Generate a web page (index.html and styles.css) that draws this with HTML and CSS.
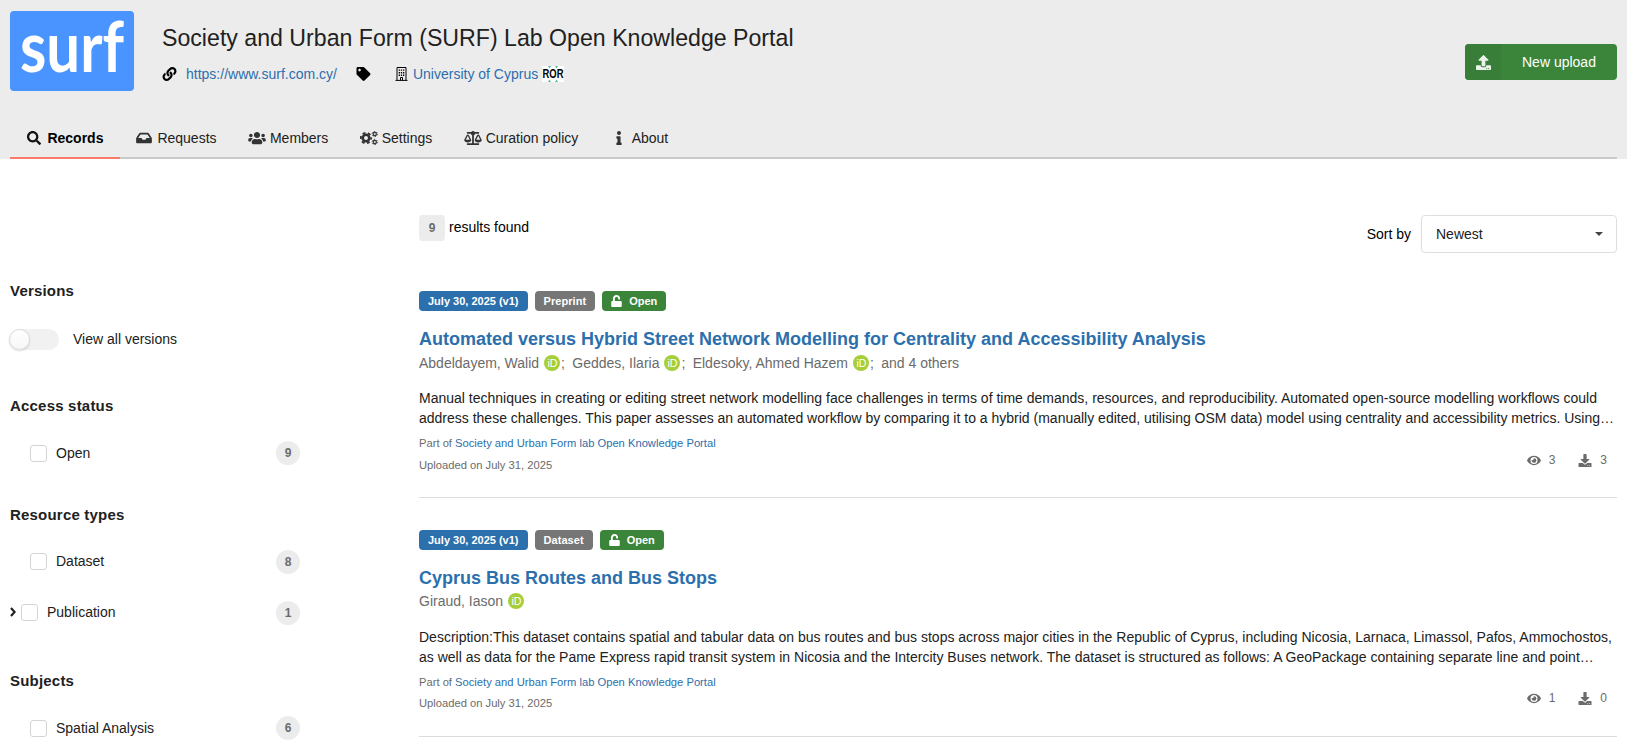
FILE: index.html
```html
<!DOCTYPE html>
<html lang="en">
<head>
  <meta charset="UTF-8">
  <title>Society and Urban Form (SURF) Lab Open Knowledge Portal</title>
  <meta name="viewport" content="width=device-width, initial-scale=1.0">
  <link rel="stylesheet" href="styles.css">
</head>
<body>
  <!-- shared icons -->
  <svg class="sprite">
    <symbol id="i-eye" viewBox="0 0 576 512"><path d="M572.52 241.4C518.29 135.59 410.93 64 288 64S57.68 135.64 3.48 241.41a32.35 32.35 0 0 0 0 29.19C57.71 376.41 165.07 448 288 448s230.32-71.64 284.52-177.41a32.35 32.35 0 0 0 0-29.19zM288 400a144 144 0 1 1 144-144 143.93 143.93 0 0 1-144 144zm0-240a95.31 95.31 0 0 0-25.31 3.79 47.85 47.85 0 0 1-66.9 66.9A95.78 95.78 0 1 0 288 160z"/></symbol>
    <symbol id="i-download" viewBox="0 0 512 512"><path d="M216 0h80c13.3 0 24 10.7 24 24v168h87.7c17.8 0 26.7 21.5 14.1 34.1L269.7 378.3c-7.5 7.5-19.8 7.5-27.3 0L90.1 226.1c-12.6-12.6-3.7-34.1 14.1-34.1H192V24c0-13.3 10.7-24 24-24zm296 376v112c0 13.3-10.7 24-24 24H24c-13.3 0-24-10.7-24-24V376c0-13.3 10.7-24 24-24h146.7l49 49c20.1 20.1 52.5 20.1 72.6 0l49-49H488c13.3 0 24 10.7 24 24zm-124 88c0-11-9-20-20-20s-20 9-20 20 9 20 20 20 20-9 20-20zm64 0c0-11-9-20-20-20s-20 9-20 20 9 20 20 20 20-9 20-20z"/></symbol>
    <symbol id="i-unlock" viewBox="0 0 448 512"><path d="M400 256H152V152.9c0-39.6 31.7-72.5 71.3-72.9 40-.4 72.7 32.1 72.7 72v16c0 13.3 10.7 24 24 24h32c13.3 0 24-10.7 24-24v-16C376 68 307.5-.3 223.5 0 139.5.3 72 69.5 72 153.5V256H48c-26.5 0-48 21.5-48 48v160c0 26.5 21.5 48 48 48h352c26.5 0 48-21.5 48-48V304c0-26.5-21.5-48-48-48z"/></symbol>
    <symbol id="i-orcid" viewBox="0 0 16 16"><circle cx="8" cy="8" r="8" fill="#a6ce39"/><text x="3.4" y="12" font-family="Liberation Sans, sans-serif" font-size="11" textLength="10" lengthAdjust="spacingAndGlyphs" fill="#fff">iD</text></symbol>
  </svg>

  <header class="header">
    <div class="community">
      <svg class="logo" viewBox="0 0 124 80">
        <text x="10" y="61" textLength="104" lengthAdjust="spacingAndGlyphs">surf</text>
      </svg>
      <div class="community-info">
        <h1>Society and Urban Form (SURF) Lab Open Knowledge Portal</h1>
        <div class="meta">
          <svg class="icon" viewBox="0 0 512 512"><path d="M326.612 185.391c59.747 59.809 58.927 155.698.36 214.59-.11.12-.24.25-.36.37l-67.2 67.2c-59.27 59.27-155.699 59.262-214.96 0-59.27-59.26-59.27-155.7 0-214.96l37.106-37.106c9.84-9.84 26.786-3.3 27.294 10.606.648 17.722 3.826 35.527 9.69 52.721 1.986 5.822.567 12.262-3.783 16.612l-13.087 13.087c-28.026 28.026-28.905 73.66-1.155 101.96 28.024 28.579 74.086 28.749 102.325.51l67.2-67.19c28.191-28.191 28.073-73.757 0-101.83-3.701-3.694-7.429-6.564-10.341-8.569a16.037 16.037 0 0 1-6.947-12.606c-.396-10.567 3.348-21.456 11.698-29.806l21.054-21.055c5.521-5.521 14.182-6.199 20.584-1.731a152.482 152.482 0 0 1 20.522 17.197zM467.547 44.449c-59.261-59.262-155.69-59.27-214.96 0l-67.2 67.2c-.12.12-.25.25-.36.37-58.566 58.892-59.387 154.781.36 214.59a152.454 152.454 0 0 0 20.521 17.196c6.402 4.468 15.064 3.789 20.584-1.731l21.054-21.055c8.35-8.35 12.094-19.239 11.698-29.806a16.037 16.037 0 0 0-6.947-12.606c-2.912-2.005-6.64-4.875-10.341-8.569-28.073-28.073-28.191-73.639 0-101.83l67.2-67.19c28.239-28.239 74.3-28.069 102.325.51 27.75 28.3 26.872 73.934-1.155 101.96l-13.087 13.087c-4.35 4.35-5.769 10.79-3.783 16.612 5.864 17.194 9.042 34.999 9.69 52.721.509 13.906 17.454 20.446 27.294 10.606l37.106-37.106c59.271-59.259 59.271-155.699.001-214.959z"/></svg>
          <a class="website" href="#">https://www.surf.com.cy/</a>
          <svg class="icon tag" viewBox="0 0 512 512"><path d="M0 252.118V48C0 21.49 21.49 0 48 0h204.118a48 48 0 0 1 33.941 14.059l211.882 211.882c18.745 18.745 18.745 49.137 0 67.882L293.823 497.941c-18.745 18.745-49.137 18.745-67.882 0L14.059 286.059A48 48 0 0 1 0 252.118zM112 64c-26.51 0-48 21.49-48 48s21.49 48 48 48 48-21.49 48-48-21.49-48-48-48z"/></svg>
          <svg class="icon building" viewBox="0 0 12 14"><path class="line" d="M1.5 13V.5h9V13M0 13.4h12M5 13v-2.5h2V13"/><path d="M3.2 2.4h1.3v1.4H3.2zM5.35 2.4h1.3v1.4h-1.3zM7.5 2.4h1.3v1.4H7.5zM3.2 5h1.3v1.4H3.2zM5.35 5h1.3v1.4h-1.3zM7.5 5h1.3v1.4H7.5zM3.2 7.6h1.3V9H3.2zM5.35 7.6h1.3V9h-1.3zM7.5 7.6h1.3V9H7.5z"/></svg>
          <a href="#">University of Cyprus</a>
          <svg class="ror" viewBox="0 0 22 16"><path fill="#fff" d="M0 0h22v16H0z"/><path fill="#53baa1" d="M6 0h3L7.5 2.5zM13 0h3l-1.5 2.5zM6 16h3l-1.5-2.5zM13 16h3l-1.5-2.5z"/><text x=".5" y="12" textLength="21" lengthAdjust="spacingAndGlyphs">ROR</text></svg>
        </div>
      </div>
      <a class="upload" href="#">
        <span class="upload-icon"><svg viewBox="0 0 512 512"><path d="M296 384h-80c-13.3 0-24-10.7-24-24V192h-87.7c-17.8 0-26.7-21.5-14.1-34.1L242.3 5.7c7.5-7.5 19.8-7.5 27.3 0l152.2 152.2c12.6 12.6 3.7 34.1-14.1 34.1H320v168c0 13.3-10.7 24-24 24zm216-8v112c0 13.3-10.7 24-24 24H24c-13.3 0-24-10.7-24-24V376c0-13.3 10.7-24 24-24h136v8c0 30.9 25.1 56 56 56h80c30.9 0 56-25.1 56-56v-8h136c13.3 0 24 10.7 24 24zm-124 88c0-11-9-20-20-20s-20 9-20 20 9 20 20 20 20-9 20-20zm64 0c0-11-9-20-20-20s-20 9-20 20 9 20 20 20 20-9 20-20z"/></svg></span>
        <span class="upload-text">New upload</span>
      </a>
    </div>

    <nav class="tabs">
      <a class="tab active" href="#"><span class="tab-icon"><svg width="14" height="14" viewBox="0 0 512 512"><path d="M505 442.7L405.3 343c-4.5-4.5-10.6-7-17-7H372c27.6-35.3 44-79.7 44-128C416 93.1 322.9 0 208 0S0 93.1 0 208s93.1 208 208 208c48.3 0 92.7-16.4 128-44v16.3c0 6.4 2.5 12.5 7 17l99.7 99.7c9.4 9.4 24.6 9.4 33.9 0l28.3-28.3c9.4-9.4 9.4-24.6.1-34zM208 336c-70.7 0-128-57.2-128-128 0-70.7 57.2-128 128-128 70.7 0 128 57.2 128 128 0 70.7-57.2 128-128 128z"/></svg></span>Records</a>
      <a class="tab" href="#"><span class="tab-icon"><svg width="16" height="14" viewBox="0 0 576 512"><path d="M567.938 243.908L462.25 85.374A48.003 48.003 0 0 0 422.311 64H153.689a48 48 0 0 0-39.938 21.374L8.062 243.908A47.994 47.994 0 0 0 0 270.533V400c0 26.51 21.49 48 48 48h480c26.51 0 48-21.49 48-48V270.533a47.994 47.994 0 0 0-8.062-26.625zM162.252 128h251.497l85.333 128H376l-32 64H232l-32-64H76.918l85.334-128z"/></svg></span>Requests</a>
      <a class="tab" href="#"><span class="tab-icon"><svg width="18" height="14" viewBox="0 0 640 512"><path d="M96 224c35.3 0 64-28.7 64-64s-28.7-64-64-64-64 28.7-64 64 28.7 64 64 64zm448 0c35.3 0 64-28.7 64-64s-28.7-64-64-64-64 28.7-64 64 28.7 64 64 64zm32 32h-64c-17.6 0-33.5 7.1-45.1 18.6 40.3 22.1 68.9 62 75.1 109.4h66c17.7 0 32-14.3 32-32v-32c0-35.3-28.7-64-64-64zm-256 0c61.9 0 112-50.1 112-112S381.9 32 320 32 208 82.1 208 144s50.1 112 112 112zm76.8 32h-8.3c-20.8 10-43.9 16-68.5 16s-47.6-6-68.5-16h-8.3C179.6 288 128 339.6 128 403.2V432c0 26.5 21.5 48 48 48h288c26.5 0 48-21.5 48-48v-28.8c0-63.6-51.6-115.2-115.2-115.2zm-223.7-13.4C161.5 263.1 145.6 256 128 256H64c-35.3 0-64 28.7-64 64v32c0 17.7 14.3 32 32 32h65.9c6.3-47.4 34.9-87.3 75.2-109.4z"/></svg></span>Members</a>
      <a class="tab" href="#"><span class="tab-icon"><svg class="line" width="18" height="14" viewBox="0 0 18 14"><circle cx="6" cy="7" r="3.3" stroke-width="2.6"/><circle cx="6" cy="7" r="5.2" stroke-width="1.9" stroke-dasharray="2.9 2.545" stroke-dashoffset="1.4"/><circle cx="14.8" cy="3" r="1.6" stroke-width="1.2"/><circle cx="14.8" cy="3" r="2.6" stroke-width="1" stroke-dasharray="1.4 1.32"/><circle cx="14.8" cy="11" r="1.6" stroke-width="1.2"/><circle cx="14.8" cy="11" r="2.6" stroke-width="1" stroke-dasharray="1.4 1.32"/></svg></span>Settings</a>
      <a class="tab" href="#"><span class="tab-icon"><svg width="18" height="14" viewBox="0 0 640 512"><path d="M256 336h-.02c0-16.18 1.34-8.73-85.05-181.51-17.65-35.29-68.19-35.36-85.87 0C-2.06 328.75.02 320.33.02 336H0c0 44.18 57.31 80 128 80s128-35.82 128-80zM128 176l72 144H56l72-144zm511.98 160c0-16.18 1.34-8.73-85.05-181.51-17.65-35.29-68.19-35.36-85.87 0-87.12 174.26-85.04 165.84-85.04 181.51H384c0 44.18 57.31 80 128 80s128-35.82 128-80h-.02zM440 320l72-144 72 144H440zm88 128H352V153.25c23.51-10.29 41.16-31.48 46.39-57.25H528c8.84 0 16-7.16 16-16V48c0-8.84-7.16-16-16-16H383.64C369.04 12.68 346.09 0 320 0s-49.04 12.68-63.64 32H112c-8.84 0-16 7.16-16 16v32c0 8.84 7.16 16 16 16h129.61c5.23 25.76 22.87 46.96 46.39 57.25V448H112c-8.84 0-16 7.16-16 16v32c0 8.84 7.16 16 16 16h416c8.84 0 16-7.16 16-16v-32c0-8.84-7.16-16-16-16z"/></svg></span>Curation policy</a>
      <a class="tab" href="#"><span class="tab-icon"><svg width="6" height="14" viewBox="0 0 192 512"><path d="M20 424.229h20V279.771H20c-11.046 0-20-8.954-20-20V212c0-11.046 8.954-20 20-20h112c11.046 0 20 8.954 20 20v212.229h20c11.046 0 20 8.954 20 20V492c0 11.046-8.954 20-20 20H20c-11.046 0-20-8.954-20-20v-47.771c0-11.046 8.954-20 20-20zM96 0C56.235 0 24 32.235 24 72s32.235 72 72 72 72-32.235 72-72S135.764 0 96 0z"/></svg></span>About</a>
    </nav>
  </header>

  <main class="main">
    <aside class="sidebar">
      <section class="facet">
        <h2>Versions</h2>
        <label class="toggle"><span class="track"><span class="knob"></span></span>View all versions</label>
      </section>

      <section class="facet access">
        <h2>Access status</h2>
        <div class="option"><span class="box"></span>Open<span class="count">9</span></div>
      </section>

      <section class="facet types">
        <h2>Resource types</h2>
        <div class="option"><span class="box"></span>Dataset<span class="count">8</span></div>
        <div class="option parent"><svg class="chevron" width="6" height="10" viewBox="0 0 6 10"><path class="line" d="M1 1l3.6 4L1 9"/></svg><span class="box"></span>Publication<span class="count">1</span></div>
      </section>

      <section class="facet subjects">
        <h2>Subjects</h2>
        <div class="option"><span class="box"></span>Spatial Analysis<span class="count">6</span></div>
      </section>
    </aside>

    <div class="results">
      <div class="results-top">
        <div class="found"><span class="total">9</span>results found</div>
        <div class="sort">Sort by <div class="dropdown">Newest<span class="caret"></span></div></div>
      </div>

      <article class="record">
        <div class="labels">
          <span class="label blue">July 30, 2025 (v1)</span>
          <span class="label grey">Preprint</span>
          <span class="label green"><svg><use href="#i-unlock"/></svg>Open</span>
        </div>
        <h2><a href="#">Automated versus Hybrid Street Network Modelling for Centrality and Accessibility Analysis</a></h2>
        <div class="authors">
          <span>Abdeldayem, Walid <svg class="orcid"><use href="#i-orcid"/></svg>;</span>
          <span>Geddes, Ilaria <svg class="orcid"><use href="#i-orcid"/></svg>;</span>
          <span>Eldesoky, Ahmed Hazem <svg class="orcid"><use href="#i-orcid"/></svg>;</span>
          <span>and 4 others</span>
        </div>
        <p class="description">Manual techniques in creating or editing street network modelling face challenges in terms of time demands, resources, and reproducibility. Automated open-source modelling workflows could<br>address these challenges. This paper assesses an automated workflow by comparing it to a hybrid (manually edited, utilising OSM data) model using centrality and accessibility metrics. Using…</p>
        <div class="extra">
          <div>
            <p>Part of <a href="#">Society and Urban Form lab Open Knowledge Portal</a></p>
            <p>Uploaded on July 31, 2025</p>
          </div>
          <div class="stats">
            <span><svg><use href="#i-eye"/></svg>3</span>
            <span><svg><use href="#i-download"/></svg>3</span>
          </div>
        </div>
      </article>

      <article class="record">
        <div class="labels">
          <span class="label blue">July 30, 2025 (v1)</span>
          <span class="label grey">Dataset</span>
          <span class="label green"><svg><use href="#i-unlock"/></svg>Open</span>
        </div>
        <h2><a href="#">Cyprus Bus Routes and Bus Stops</a></h2>
        <div class="authors">
          <span>Giraud, Iason <svg class="orcid"><use href="#i-orcid"/></svg></span>
        </div>
        <p class="description">Description:This dataset contains spatial and tabular data on bus routes and bus stops across major cities in the Republic of Cyprus, including Nicosia, Larnaca, Limassol, Pafos, Ammochostos,<br>as well as data for the Pame Express rapid transit system in Nicosia and the Intercity Buses network. The dataset is structured as follows: A GeoPackage containing separate line and point…</p>
        <div class="extra">
          <div>
            <p>Part of <a href="#">Society and Urban Form lab Open Knowledge Portal</a></p>
            <p>Uploaded on July 31, 2025</p>
          </div>
          <div class="stats">
            <span><svg><use href="#i-eye"/></svg>1</span>
            <span><svg><use href="#i-download"/></svg>0</span>
          </div>
        </div>
      </article>
    </div>
  </main>
</body>
</html>
```
FILE: styles.css
```css
* {
  box-sizing: border-box;
}

body {
  margin: 0;
  font-family: "Liberation Sans", Arial, sans-serif;
  font-size: 14px;
  line-height: 20px;
  color: #212121;
  background: #fff;
}

h1, h2, p {
  margin: 0;
}

a {
  color: #2c6fad;
  text-decoration: none;
}

svg {
  display: block;
  flex: none;
  fill: currentColor;
}

.line {
  fill: none;
  stroke: currentColor;
}

.sprite {
  display: none;
}

/* header */
.header {
  height: 159px;
  padding: 11px 10px 0;
  background: #ececec;
}

.community {
  display: flex;
  height: 107px;
}

.logo {
  width: 124px;
  height: 80px;
  border-radius: 4px;
  background: #4a94ff;
  overflow: visible;
}

.logo text {
  font-family: Lato, sans-serif;
  font-size: 71px;
  font-weight: bold;
  fill: #fff;
}

.community-info {
  flex: 1;
  padding: 11px 0 0 28px;
}

h1 {
  font-size: 23.15px;
  font-weight: normal;
  line-height: 32px;
  white-space: nowrap;
}

.meta {
  display: flex;
  align-items: center;
  margin-top: 10px;
  color: #000;
}

.icon {
  width: 15px;
  height: 14px;
  margin-right: 9px;
}

.icon.tag {
  margin: 0 24px 0 19px;
}

.icon.building {
  width: 13px;
  margin-right: 5px;
}

.ror {
  width: 22px;
  height: 16px;
  margin-left: 4px;
  overflow: visible;
}

.ror text {
  font-size: 12px;
  font-weight: bold;
}

.upload {
  display: flex;
  width: 152px;
  height: 36px;
  margin-top: 33px;
  border-radius: 4px;
  color: #fff;
  background: #3b853b;
  line-height: 36px;
}

.upload-icon {
  display: flex;
  align-items: center;
  justify-content: center;
  width: 36px;
  border-radius: 4px 0 0 4px;
  background: #387e38;
  color: #ebf3eb;
}

.upload-icon svg {
  width: 15px;
  height: 15px;
}

.upload-text {
  padding-left: 21px;
  white-space: nowrap;
}

.tabs {
  display: flex;
  height: 41px;
  border-bottom: 2px solid #cacaca;
}

.tab {
  display: flex;
  align-items: center;
  height: 41px;
  padding: 0 16px 2px;
  color: #212121;
}

.tab.active {
  width: 110px;
  padding-bottom: 0;
  border-bottom: 2px solid #fb7a6a;
  font-weight: bold;
  color: #000;
}

.tab-icon {
  display: flex;
  justify-content: center;
  width: 16.5px;
  margin-right: 4.9px;
  color: #333;
}

.active .tab-icon {
  color: #111;
}

/* facets */
.main {
  display: flex;
  padding: 0 10px;
}

.sidebar {
  width: 409px;
  padding-top: 122px;
}

.facet {
  height: 115px;
}

.facet.access {
  height: 109px;
}

.facet.types {
  height: 166px;
}

.facet.subjects {
  height: 69px;
}

.facet h2 {
  margin-bottom: 28px;
  font-size: 15px;
  line-height: 20px;
  letter-spacing: .2px;
}

.toggle {
  display: flex;
  gap: 14px;
}

.track {
  width: 49px;
  height: 21px;
  border-radius: 11px;
  background: #f1f1f1;
}

.knob {
  display: block;
  width: 21px;
  height: 21px;
  margin-left: -1px;
  border: 1px solid #dadada;
  border-radius: 50%;
  background: linear-gradient(#fff, #f7f7f7);
  box-shadow: 0 1px 2px rgba(0, 0, 0, .15);
}

.option {
  display: flex;
  align-items: center;
  width: 290px;
  height: 24px;
  margin-bottom: 27px;
  padding-left: 20px;
}

.types .option {
  padding-bottom: 2px;
}

.facet h2 + .option {
  margin-top: -3px;
}

.option.parent {
  padding-left: 0;
}

.chevron {
  margin-right: 5px;
  stroke-width: 2.2;
}

.box {
  width: 17px;
  height: 17px;
  margin-right: 9px;
  border: 1px solid #d4d4d5;
  border-radius: 3px;
}

.count {
  align-self: flex-start;
  width: 24px;
  height: 24px;
  margin-left: auto;
  border-radius: 50%;
  background: #ececec;
  color: #6b6b6b;
  font-size: 12px;
  font-weight: bold;
  line-height: 24px;
  text-align: center;
}

/* results */
.results {
  flex: 1;
  min-width: 0;
  padding-top: 56px;
}

.results-top {
  display: flex;
  justify-content: space-between;
  height: 38px;
  color: #000;
}

.found {
  display: flex;
  line-height: 25px;
}

.total {
  width: 26px;
  height: 26px;
  margin-right: 4px;
  border-radius: 4px;
  background: #ececec;
  color: #6b6b6b;
  font-size: 12px;
  font-weight: bold;
  line-height: 26px;
  text-align: center;
}

.sort {
  display: flex;
  align-items: center;
  gap: 10px;
}

.dropdown {
  display: flex;
  align-items: center;
  justify-content: space-between;
  width: 196px;
  height: 38px;
  padding: 0 13px 0 14px;
  border: 1px solid #dededf;
  border-radius: 4px;
  color: #212121;
}

.caret {
  border: 4px solid transparent;
  border-top-color: #444;
  border-bottom: 0;
}

.record {
  height: 239px;
  padding-top: 32px;
  border-bottom: 1px solid #dcdcdc;
}

.results-top + .record {
  height: 245px;
  padding-top: 38px;
}

.labels {
  display: flex;
  gap: 7px;
  height: 20px;
}

.label {
  display: flex;
  align-items: center;
  height: 20px;
  padding: 0 9px;
  border-radius: 4px;
  color: #fff;
  font-size: 11px;
  font-weight: bold;
  white-space: nowrap;
}

.label svg {
  width: 11px;
  height: 12px;
  margin-right: 7px;
}

.blue {
  background: #2c6fad;
}

.grey {
  background: #767676;
  letter-spacing: .06px;
}

.green {
  background: #3b853b;
}

.record h2 {
  margin-top: 17px;
  font-size: 18px;
  line-height: 22px;
  white-space: nowrap;
}

.authors {
  display: flex;
  gap: 7.3px;
  margin-top: 3px;
  color: #6b6b6b;
}

.authors span {
  display: flex;
  align-items: center;
}

.orcid {
  width: 16px;
  height: 16px;
  margin: 0 1px 0 5px;
}

.description {
  margin-top: 15px;
  white-space: nowrap;
}

.extra {
  display: flex;
  justify-content: space-between;
  padding-top: 5px;
  color: #6b6b6b;
  font-size: 11.2px;
}

.extra p {
  height: 22px;
}

.stats {
  display: flex;
  gap: 23px;
  padding: 17px 10px 0 0;
  font-size: 12px;
}

.stats span {
  display: flex;
  align-items: center;
  height: 20px;
}

.stats svg {
  width: 14px;
  height: 13px;
  margin-right: 8px;
}

/* the last record sits slightly tighter */
.record + .record .authors {
  margin-top: 2px;
}

.record + .record .description {
  margin-top: 16px;
}

.record + .record .extra p {
  height: 21px;
}

.record + .record .stats {
  padding-top: 16px;
}
```
